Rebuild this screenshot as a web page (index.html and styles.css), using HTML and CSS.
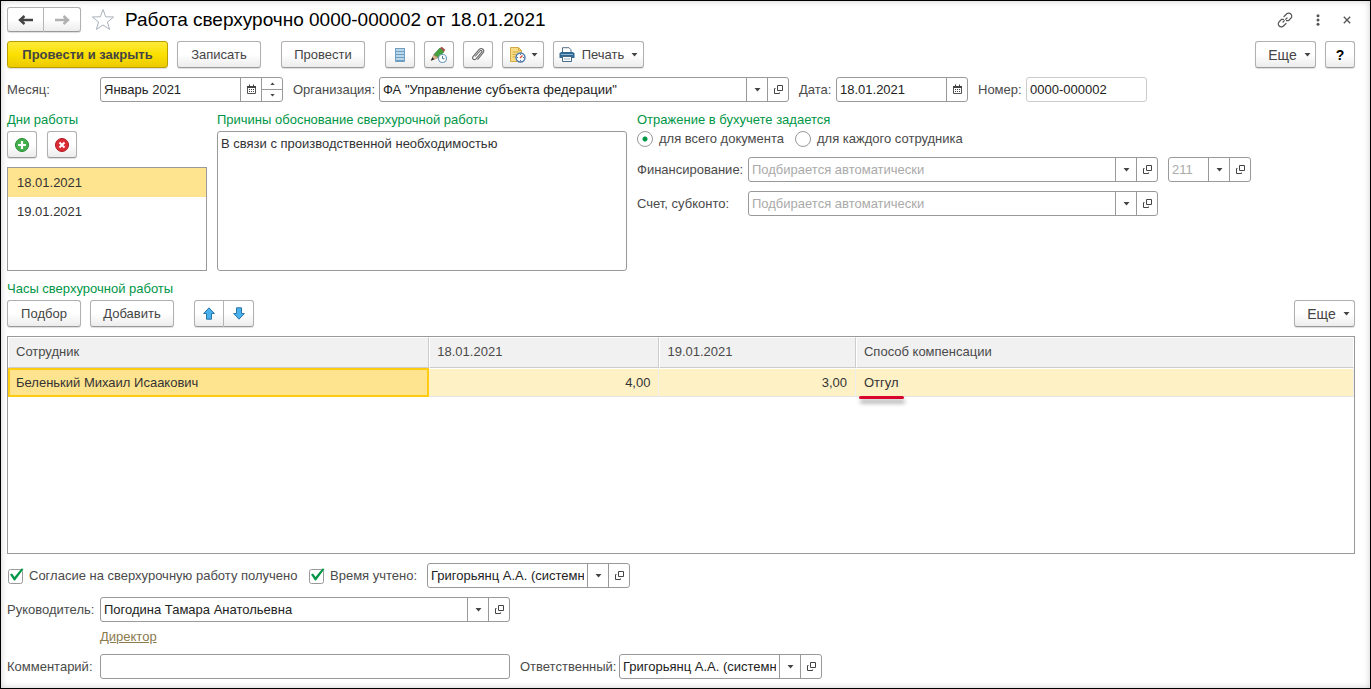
FILE: index.html
```html
<!DOCTYPE html>
<html lang="ru">
<head>
<meta charset="utf-8">
<title>Работа сверхурочно 0000-000002 от 18.01.2021</title>
<link rel="stylesheet" href="styles.css">
</head>
<body>
<svg class="defs" aria-hidden="true">
  <symbol id="caret" viewBox="0 0 7 4"><path d="M0.5 0h6L3.5 3.5z" fill="#444"/></symbol>
  <symbol id="open" viewBox="0 0 11 11"><path d="M4.500 1.500h5v5h-5zM2.500 4.500h-1v5h5v-1" fill="none" stroke="#444"/></symbol>
  <symbol id="calendar" viewBox="0 0 11 11"><path d="M1.500 2.500h8v7h-8z" fill="none" stroke="#555"/><path d="M1 2h9v2H1zM3 0.500h1v2H3zM7 0.500h1v2H7z" fill="#444"/><path d="M3 5.500h6M3 7.500h6" stroke="#444" stroke-dasharray="1 1"/></symbol>
</svg>
<main class="window">
  <header class="title-row">
    <div class="joined">
      <button class="btn nav" aria-label="Назад"><svg width="16" height="10" viewBox="0 0 16 10"><path d="M15 5H3M6.500 1L2 5l4.500 4" fill="none" stroke="#444" stroke-width="2.400"/></svg></button>
      <button class="btn nav" aria-label="Вперед"><svg width="16" height="10" viewBox="0 0 16 10"><path d="M1 5h12M9.500 1L14 5 9.500 9" fill="none" stroke="#b0b0b0" stroke-width="2.400"/></svg></button>
    </div>
    <button class="plain star" aria-label="В избранное"><svg width="24" height="23" viewBox="0 0 24 23"><path d="M12 1.500l2.700 7.300 8 .2-6.300 5 2.300 7.500L12 17l-6.700 4.500L7.600 14 1.300 9l8-.2z" fill="#fff" stroke="#aab2bc"/></svg></button>
    <h1>Работа сверхурочно 0000-000002 от 18.01.2021</h1>
    <div class="window-tools">
      <button class="plain" aria-label="Ссылка"><svg width="16" height="16" viewBox="0 0 16 16" fill="none" stroke="#555" stroke-width="1.200" stroke-linecap="round"><path d="M7 4.500L9.500 2a2.900 2.900 0 0 1 4.300 0 2.900 2.900 0 0 1 0 4.300L11.500 8.700H9.500M9 11.500L6.500 14a2.900 2.900 0 0 1-4.300 0 2.900 2.900 0 0 1 0-4.300L4.500 7.300H6.500M6 10l1.300-1.300M8.700 7.300L10 6"/></svg></button>
      <button class="plain" aria-label="Меню"><svg width="4" height="12" viewBox="0 0 4 12" fill="#555"><circle cx="2" cy="1.700" r="1.500"/><circle cx="2" cy="6" r="1.500"/><circle cx="2" cy="10.300" r="1.500"/></svg></button>
      <button class="plain" aria-label="Закрыть"><svg width="8" height="8" viewBox="0 0 8 8"><path d="M.8.800l6.400 6.400M7.200.800L.8 7.200" stroke="#555" stroke-width="1.300"/></svg></button>
    </div>
  </header>

  <div class="toolbar">
    <button class="btn primary">Провести и закрыть</button>
    <button class="btn text">Записать</button>
    <button class="btn text spaced">Провести</button>
    <button class="btn icon spaced" aria-label="Список"><svg width="12" height="16" viewBox="0 0 12 16"><path d="M1 1h10v14H1z" fill="#b9d7ea"/><path d="M1 1.500h10M1 4.500h10M1 7.500h10M1 10.500h10M1 13.500h10" stroke="#6f9fc0" stroke-width="1.200"/><path d="M1.500 1v13.500h9V1" fill="none" stroke="#6f9fc0"/></svg></button>
    <button class="btn icon" aria-label="Изменить"><svg width="18" height="18" viewBox="0 0 18 18"><path d="M4 8.500l6-6.500 4 3.700L8 12z" fill="#45a33d" stroke="#24752b" stroke-width=".7"/><path d="M10 2l1.800-1.300 3.500 3L14 5.700z" fill="#a5524a"/><path d="M4 8.500L1 14.500l6.500-2.500-1-2-1.500.3z" fill="#e3b98c" stroke="#8b6b4c" stroke-width=".5"/><path d="M1 14.500l1.400-3.200 2 2z" fill="#222"/><circle cx="12.500" cy="12.500" r="4" fill="#fff" stroke="#6e9fbd" stroke-width="1.200"/><path d="M12.500 10v2.700h2" fill="none" stroke="#4c7d9d"/></svg></button>
    <button class="btn icon" aria-label="Файлы"><svg width="14" height="15" viewBox="0 0 14 15"><path d="M4 9.500l5-5.500c1.200-1.300 2.700.1 1.600 1.400L5 11.800c-2 2-4.600-.3-2.800-2.400L8 2.700c2.600-2.800 6.300.5 4 3.300L6.500 12.700" fill="none" stroke="#666" stroke-width="1.100"/></svg></button>
    <button class="btn drop" aria-label="Отчеты"><svg width="18" height="16" viewBox="0 0 18 16"><path d="M1.500.500h8l3 3v11h-11z" fill="#f8dc85" stroke="#d3a943"/><path d="M9.500.500v3h3M3.500 5h6M3.500 7.500h4M3.500 10h3" fill="none" stroke="#d3a943"/><circle cx="11.500" cy="10.500" r="4.500" fill="#fff" stroke="#4879ad" stroke-width="1.400"/><path d="M11.500 7v1M15 10.500h-1M11.500 14v-1M8 10.500h1" stroke="#4879ad"/><path d="M11 11l2.500-2.500" stroke="#d24636" stroke-width="1.300"/></svg><svg class="caret"><use href="#caret"/></svg></button>
    <button class="btn print"><svg width="16" height="15" viewBox="0 0 16 15"><path d="M3.500 6V.700h6.500l2 2V6" fill="#fff" stroke="#54718b"/><path d="M2 5h12l1.500 1.500V11H.5V6.500z" fill="#2f6692"/><path d="M2 7.500h12" stroke="#8cb5d3"/><path d="M3.500 9.500h9v5h-9z" fill="#fff" stroke="#476b87"/><path d="M5 12h6" stroke="#9ab3c5"/></svg>Печать<svg class="caret"><use href="#caret"/></svg></button>
    <button class="btn more push">Еще<svg class="caret"><use href="#caret"/></svg></button>
    <button class="btn icon help" aria-label="Справка">?</button>
  </div>

  <div class="fields">
    <label class="lead" for="month">Месяц:</label>
    <div class="field month"><input id="month" value="Январь 2021"><button aria-label="Календарь"><svg class="glyph"><use href="#calendar"/></svg></button><span class="spin"><button aria-label="Больше"><svg class="tiny up"><use href="#caret"/></svg></button><button aria-label="Меньше"><svg class="tiny"><use href="#caret"/></svg></button></span></div>
    <label class="org-label" for="org">Организация:</label>
    <div class="field wide"><input id="org" value="ФА &quot;Управление субъекта федерации&quot;"><button aria-label="Выбрать"><svg class="caret"><use href="#caret"/></svg></button><button aria-label="Открыть"><svg class="glyph"><use href="#open"/></svg></button></div>
    <label class="date-label" for="date">Дата:</label>
    <div class="field date"><input id="date" value="18.01.2021"><button aria-label="Календарь"><svg class="glyph"><use href="#calendar"/></svg></button></div>
    <label class="num-label" for="number">Номер:</label>
    <div class="field number"><input id="number" value="0000-000002" readonly></div>
  </div>

  <div class="details">
    <section class="days">
      <h2>Дни работы</h2>
      <div class="day-tools">
        <button class="btn icon" aria-label="Добавить день"><svg width="16" height="16" viewBox="0 0 16 16"><circle cx="8" cy="8" r="6.500" fill="#43b04c" stroke="#218a32"/><path d="M8 4v8M4 8h8" stroke="#fff" stroke-width="2.200"/></svg></button>
        <button class="btn icon" aria-label="Удалить день"><svg width="16" height="16" viewBox="0 0 16 16"><circle cx="8" cy="8" r="6.500" fill="#dc2c34" stroke="#b01820"/><path d="M5.500 5.500l5 5M10.500 5.500l-5 5" stroke="#fff" stroke-width="2"/></svg></button>
      </div>
      <ul class="day-list" role="listbox" aria-label="Дни работы">
        <li class="selected" role="option" aria-selected="true">18.01.2021</li>
        <li role="option" aria-selected="false">19.01.2021</li>
      </ul>
    </section>
    <section class="reason">
      <h2><label for="reason">Причины обоснование сверхурочной работы</label></h2>
      <textarea id="reason">В связи с производственной необходимостью</textarea>
    </section>
    <section class="accounting">
      <h2>Отражение в бухучете задается</h2>
      <div class="radios">
        <label><input type="radio" name="scope" checked>для всего документа</label>
        <label><input type="radio" name="scope">для каждого сотрудника</label>
      </div>
      <div class="fields">
        <label class="acc-label" for="fin">Финансирование:</label>
        <div class="field wide"><input id="fin" placeholder="Подбирается автоматически"><button aria-label="Выбрать"><svg class="caret"><use href="#caret"/></svg></button><button aria-label="Открыть"><svg class="glyph"><use href="#open"/></svg></button></div>
        <div class="field code"><input aria-label="Код" placeholder="211"><button aria-label="Выбрать"><svg class="caret"><use href="#caret"/></svg></button><button aria-label="Открыть"><svg class="glyph"><use href="#open"/></svg></button></div>
      </div>
      <div class="fields">
        <label class="acc-label" for="acc">Счет, субконто:</label>
        <div class="field wide"><input id="acc" placeholder="Подбирается автоматически"><button aria-label="Выбрать"><svg class="caret"><use href="#caret"/></svg></button><button aria-label="Открыть"><svg class="glyph"><use href="#open"/></svg></button></div>
      </div>
    </section>
  </div>

  <section class="hours">
    <h2>Часы сверхурочной работы</h2>
    <div class="toolbar">
      <button class="btn pick">Подбор</button>
      <button class="btn text">Добавить</button>
      <div class="joined spaced">
        <button class="btn icon" aria-label="Вверх"><svg width="12" height="13" viewBox="0 0 12 13"><path d="M6 .800l5.300 5.700H8.500v5.700h-5V6.500H.7z" fill="#49b0ee" stroke="#2676a8"/></svg></button>
        <button class="btn icon" aria-label="Вниз"><svg width="12" height="13" viewBox="0 0 12 13"><path d="M6 12.200L.7 6.500h2.800V.800h5v5.700h2.800z" fill="#49b0ee" stroke="#2676a8"/></svg></button>
      </div>
      <button class="btn more push">Еще<svg class="caret"><use href="#caret"/></svg></button>
    </div>
  </section>

  <div class="grid-box">
    <table>
      <colgroup><col class="c-name"><col class="c-day1"><col class="c-day2"><col></colgroup>
      <thead><tr><th>Сотрудник</th><th>18.01.2021</th><th>19.01.2021</th><th>Способ компенсации</th></tr></thead>
      <tbody><tr><td class="current">Беленький Михаил Исаакович</td><td class="num">4,00</td><td class="num">3,00</td><td><span class="marked">Отгул</span></td></tr></tbody>
    </table>
  </div>

  <div class="fields">
    <label class="check agree"><input type="checkbox" checked>Согласие на сверхурочную работу получено</label>
    <label class="check counted"><input type="checkbox" checked>Время учтено:</label>
    <div class="field person"><input aria-label="Кем учтено" value="Григорьянц А.А. (системный)"><button aria-label="Выбрать"><svg class="caret"><use href="#caret"/></svg></button><button aria-label="Открыть"><svg class="glyph"><use href="#open"/></svg></button></div>
  </div>

  <div class="manager">
    <div class="fields">
      <label class="lead" for="manager">Руководитель:</label>
      <div class="field wide"><input id="manager" value="Погодина Тамара Анатольевна"><button aria-label="Выбрать"><svg class="caret"><use href="#caret"/></svg></button><button aria-label="Открыть"><svg class="glyph"><use href="#open"/></svg></button></div>
    </div>
    <a href="#">Директор</a>
  </div>

  <div class="fields">
    <label class="lead" for="comment">Комментарий:</label>
    <div class="field wide"><input id="comment"></div>
    <label class="resp-label" for="resp">Ответственный:</label>
    <div class="field person"><input id="resp" value="Григорьянц А.А. (системный)"><button aria-label="Выбрать"><svg class="caret"><use href="#caret"/></svg></button><button aria-label="Открыть"><svg class="glyph"><use href="#open"/></svg></button></div>
  </div>
</main>
</body>
</html>
```
FILE: styles.css
```css
* { box-sizing: border-box; }

body {
  margin: 0;
  font: 13px/16px "Liberation Sans", Arial, sans-serif;
  color: #4a4a4a;
  background: #fff;
}

button, input, textarea { font: inherit; color: inherit; margin: 0; }
h1, h2 { margin: 0; font-weight: 400; }
h2 { font-size: 13px; line-height: 18px; color: #009646; white-space: nowrap; }
svg { display: block; flex: none; }
.defs { position: absolute; width: 0; height: 0; }

.window {
  display: flex;
  flex-direction: column;
  gap: 9px;
  min-height: 100vh;
  padding: 6px 15px 9px 6px;
  border: 1px solid #000;
  box-shadow: inset 0 0 6px #ccc;
}

.title-row { display: flex; align-items: center; height: 25px; }
.title-row h1 { font-size: 19px; line-height: 24px; color: #000; white-space: nowrap; }
.star { margin: 0 10px; }
.window-tools { display: flex; align-items: center; gap: 23px; margin-left: auto; padding-right: 4px; }
.plain { padding: 0; border: 0; background: none; }

.btn {
  display: flex;
  align-items: center;
  justify-content: center;
  flex: none;
  height: 27px;
  padding: 0;
  border: 1px solid #b0b0b0;
  border-bottom-color: #999;
  border-radius: 3px;
  background: linear-gradient(#fff 50%, #ececec);
  box-shadow: 0 1px 1px #ddd;
  color: #444;
  white-space: nowrap;
}
.joined { display: flex; }
.joined .btn:first-child { border-radius: 3px 0 0 3px; }
.joined .btn:last-child { border-left: 0; border-radius: 0 3px 3px 0; }
.nav { width: 37px; height: 25px; }

.toolbar { display: flex; gap: 9px; }
.spaced { margin-left: 11px; }
.push { margin-left: auto; }
.primary {
  width: 161px;
  border-color: #b79f00;
  background: linear-gradient(#ffea3c, #fbe000 50%, #ecca00);
  font-weight: 700;
}
.text { width: 84px; }
.pick { width: 74px; }
.icon { width: 30px; }
.drop { width: 42px; gap: 4px; }
.print { width: 91px; gap: 7px; }
.more { width: 61px; gap: 7px; padding-left: 8px; font-size: 14px; }
.help { font-size: 14px; font-weight: 700; color: #000; }
.caret { width: 7px; height: 4px; }
.glyph { width: 11px; height: 11px; }
.tiny { width: 5px; height: 3px; }
.up { transform: scaleY(-1); }

.fields { display: flex; align-items: center; }
.fields label { flex: none; white-space: nowrap; }
.lead { width: 93px; }
.org-label { width: 96px; padding-left: 10px; }
.date-label { width: 47px; padding-left: 10px; }
.num-label { width: 58px; padding-left: 10px; }
.resp-label { width: 109px; padding-left: 10px; }
.acc-label { width: 111px; }

.field {
  display: flex;
  height: 25px;
  min-width: 0;
  border: 1px solid #999;
  border-radius: 3px;
  background: #fff;
  color: #222;
}
.field input {
  flex: 1;
  width: 0;
  min-width: 0;
  padding: 0 3px;
  border: 0;
  background: none;
  outline: 0;
}
.field input::placeholder { color: #aaa; opacity: 1; }
.field > button {
  display: flex;
  align-items: center;
  justify-content: center;
  flex: none;
  width: 21px;
  padding: 0;
  border: 0;
  border-left: 1px solid #999;
  background: none;
}
.spin { display: flex; flex-direction: column; width: 21px; border-left: 1px solid #999; }
.spin button {
  display: flex;
  flex: 1;
  align-items: center;
  justify-content: center;
  padding: 0;
  border: 0;
  background: none;
}
.spin button + button { border-top: 1px solid #999; }
.wide { flex: 0 1 410px; }
.month { flex: 0 1 183px; }
.date { flex: 0 1 132px; }
.number { flex: 0 1 121px; border-color: #ccc; }
.code { flex: 0 1 83px; margin-left: 10px; }
.person { flex: 0 1 203px; }

.details { display: flex; gap: 10px; min-height: 160px; }
.days, .reason, .accounting, .hours { display: flex; flex-direction: column; gap: 2px; }
.days { flex: 0 1 200px; }
.reason { flex: 0 1 410px; }
.accounting { flex: 1; }
.day-tools { display: flex; gap: 10px; }
.day-list {
  flex: 1;
  margin: 7px 0 0;
  padding: 0;
  border: 1px solid #999;
  list-style: none;
  color: #333;
}
.day-list li { padding: 7px 9px 6px; }
.day-list .selected { background: #ffe48f; }
.reason textarea {
  flex: 1;
  width: 100%;
  padding: 4px 3px;
  border: 1px solid #999;
  border-radius: 3px;
  outline: 0;
  resize: none;
  color: #333;
}
.radios { display: flex; gap: 11px; }
.radios label { display: flex; align-items: center; gap: 6px; white-space: nowrap; }
.radios input {
  appearance: none;
  width: 16px;
  height: 16px;
  border: 1px solid #999;
  border-radius: 50%;
}
.radios input:checked { background: radial-gradient(circle, #009646 2px, #fff 3px); }
.accounting .fields { margin-top: 7px; }
.radios + .fields { padding-top: 1px; }

.grid-box { flex: 1; min-height: 120px; border: 1px solid #999; }
table { width: 100%; border-collapse: separate; border-spacing: 0; table-layout: fixed; }
.c-name { width: 31.3%; }
.c-day1 { width: 17.1%; }
.c-day2 { width: 14.6%; }
th {
  height: 31px;
  padding: 0 7px 2px;
  border: 1px solid #fff;
  border-right-color: #ccc;
  border-bottom-color: #ccc;
  background: #f1f1f1;
  font-weight: 400;
  text-align: left;
}
th:last-child { border-right-color: #fff; }
td {
  height: 29px;
  padding: 0 8px;
  border-top: 1px solid #fff;
  border-right: 1px solid #eee;
  border-bottom: 1px solid #e4e4e4;
  background: #fff1c6;
  color: #333;
}
td.current { padding-left: 6px; border: 2px solid #fc1; background: #ffe48f; }
td.num { text-align: right; }
.marked { position: relative; }
.marked::after {
  content: "";
  position: absolute;
  left: -5px;
  right: -5px;
  bottom: -9px;
  height: 3px;
  border-radius: 2px;
  background: #d8062c;
  box-shadow: 1px 4px 4px #999;
}

.check { display: flex; align-items: center; gap: 4px; }
.check input {
  appearance: none;
  width: 18px;
  height: 18px;
  background: url("data:image/svg+xml,%3Csvg xmlns='http://www.w3.org/2000/svg' width='18' height='18'%3E%3Crect x='1.5' y='2.500' width='14' height='14' rx='2' fill='%23fff' stroke='%23999'/%3E%3C/svg%3E") no-repeat;
}
.check input:checked {
  background-image: url("data:image/svg+xml,%3Csvg xmlns='http://www.w3.org/2000/svg' width='18' height='18'%3E%3Crect x='1.5' y='2.500' width='14' height='14' rx='2' fill='%23fff' stroke='%23999'/%3E%3Cpath d='M3 7.500l2-1 2.500 3.500L14.500 1.500l2 .5L8 13.500H7z' fill='%23009646'/%3E%3C/svg%3E");
}
.agree { width: 301px; }
.counted { width: 119px; }

.manager { display: flex; flex-direction: column; align-items: flex-start; gap: 7px; }
.manager .fields { width: 100%; }
.manager a { margin-left: 93px; color: #8a7a4c; }
```
